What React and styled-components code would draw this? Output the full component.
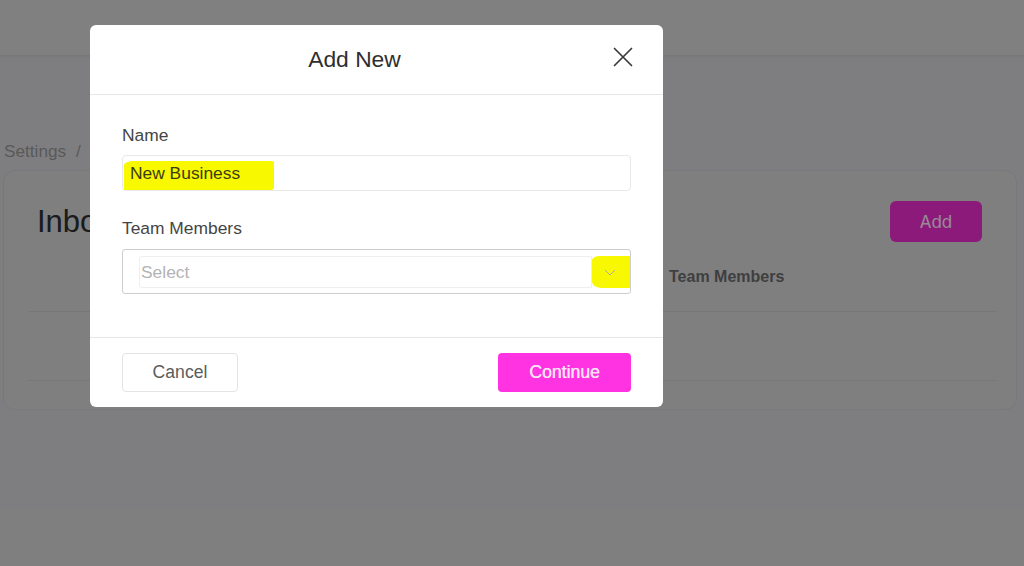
import React from "react";
import styled, { createGlobalStyle } from "styled-components";

const GlobalStyle = createGlobalStyle`
  html, body { margin: 0; padding: 0; }
  body { font-family: "Liberation Sans", Arial, sans-serif; background: #d3d3d5; }
  * { box-sizing: border-box; }
`;

const Page = styled.div`
  position: relative;
  width: 1024px;
  height: 566px;
  overflow: hidden;
  background: #d3d3d5;
`;

const TopBar = styled.div`
  height: 56px;
  background: #d6d6d6;
  border-bottom: 1px solid #c8c8ca;
  box-shadow: 0 1px 3px rgba(0, 0, 0, 0.06);
`;

const Content = styled.div`
  padding: 85px 7px 0 3px;
`;

const Breadcrumb = styled.div`
  padding-left: 1px;
  font-size: 17.2px;
  line-height: 20px;
  color: #959597;
  span { margin-left: 10px; }
`;

const Card = styled.div`
  margin-top: 9px;
  height: 240px;
  border: 1px solid #c9c9cb;
  border-radius: 12px;
  background: #d4d4d6;
  padding: 30px 19px 0 24px;
`;

const TitleRow = styled.div`
  display: flex;
  align-items: center;
  justify-content: space-between;
  padding: 0 15px 0 9px;
  height: 41px;
`;

const CardTitle = styled.h1`
  margin: 0;
  font-weight: 400;
  font-size: 31px;
  color: #2e2e30;
`;

const AddButton = styled.button`
  width: 92px;
  height: 41px;
  border: none;
  border-radius: 6px;
  background: #e82ccc;
  color: #ffe8fb;
  font-family: Inter, "Liberation Sans", sans-serif;
  font-size: 17px;
`;

const TableRow = styled.div`
  display: grid;
  grid-template-columns: 628px 1fr;
  border-bottom: 1px solid #c6c6c8;
  height: ${(p) => p.$h}px;
  align-items: ${(p) => (p.$head ? "end" : "center")};
  padding-bottom: ${(p) => (p.$head ? 25 : 0)}px;
`;

const HeadCell = styled.div`
  padding-left: 13px;
  font-weight: 700;
  font-size: 16px;
  line-height: 18px;
  color: #6a6a6c;
`;

const Overlay = styled.div`
  position: absolute;
  inset: 0;
  background: rgba(0, 0, 0, 0.4);
  padding: 25px 0 0 90px;
`;

const Modal = styled.div`
  width: 573px;
  height: 382px;
  background: #fff;
  border-radius: 6px;
  display: flex;
  flex-direction: column;
`;

const ModalHeader = styled.div`
  position: relative;
  height: 70px;
  border-bottom: 1px solid #e6e6e6;
  display: flex;
  align-items: center;
  justify-content: center;
`;

const ModalTitle = styled.h2`
  margin: 0;
  font-weight: 400;
  font-size: 22.8px;
  color: #2f2f2f;
  transform: translate(-22px, 0);
`;

const CloseButton = styled.button`
  position: absolute;
  right: 30px;
  top: 22px;
  width: 20px;
  height: 20px;
  padding: 0;
  border: none;
  background: none;
  display: flex;
`;

const ModalBody = styled.div`
  flex: 1;
  padding: 31px 32px 0 32px;
  display: flex;
  flex-direction: column;
`;

const Label = styled.label`
  font-size: 17.4px;
  line-height: 19px;
  color: #454545;
  margin-top: ${(p) => p.$mt || 0}px;
  margin-bottom: ${(p) => p.$mb || 10}px;
`;

const TextBox = styled.div`
  height: 36px;
  border: 1px solid #e8e8e8;
  border-radius: 4px;
  display: flex;
  align-items: stretch;
  padding: 5px 0 0 1px;
`;

const Marker = styled.span`
  display: flex;
  align-items: center;
  width: 150px;
  padding: 0 0 5px 6px;
  background: #f8f800;
  border-radius: 10px 2px 3px 0 / 4px 2px 3px 8px;
  font-size: 17.4px;
  color: #3c3c12;
`;

const SelectBox = styled.div`
  height: 45px;
  border: 1px solid #cdcdcd;
  border-radius: 3px;
  display: flex;
  padding: 6px 0 5px 16px;
`;

const SelectInner = styled.div`
  flex: 1;
  border: 1px solid #efefef;
  border-radius: 3px 0 0 3px;
  display: flex;
  align-items: center;
  padding-left: 1px;
  font-size: 17.4px;
  color: #b4b4b4;
`;

const Chevron = styled.div`
  width: 38px;
  background: #f8f800;
  border-radius: 8px 0 0 10px / 4px 0 0 6px;
  display: flex;
  align-items: center;
  justify-content: center;
  padding-right: 3px;
`;

const ModalFooter = styled.div`
  height: 70px;
  border-top: 1px solid #e6e6e6;
  display: flex;
  align-items: flex-start;
  justify-content: space-between;
  padding: 15px 32px 0 32px;
`;

const FooterButton = styled.button`
  height: 39px;
  width: ${(p) => p.$w}px;
  border-radius: 4px;
  font-family: "Liberation Sans", Arial, sans-serif;
  font-size: 17.6px;
  border: ${(p) => (p.$primary ? "none" : "1px solid #e4e4e4")};
  background: ${(p) => (p.$primary ? "#ff33e1" : "#fff")};
  color: ${(p) => (p.$primary ? "#fde4f8" : "#5c5c5c")};
  font-weight: 400;
  text-shadow: ${(p) => (p.$primary ? "0.3px 0 0 #fde4f8" : "none")};
`;

export default function App() {
  return (
    <>
      <GlobalStyle />
      <Page>
        <TopBar />
        <Content>
          <Breadcrumb>
            Settings<span>/</span>
          </Breadcrumb>
          <Card>
            <TitleRow>
              <CardTitle>Inbox</CardTitle>
              <AddButton>Add</AddButton>
            </TitleRow>
            <TableRow $head $h={70}>
              <HeadCell />
              <HeadCell>Team Members</HeadCell>
            </TableRow>
            <TableRow $h={69} />
          </Card>
        </Content>
        <Overlay>
          <Modal>
            <ModalHeader>
              <ModalTitle>Add New</ModalTitle>
              <CloseButton aria-label="Close">
                <svg width="20" height="20" viewBox="0 0 20 20">
                  <path d="M1.5 1.5 L18.5 18.5 M18.5 1.5 L1.5 18.5" stroke="#3a3a3a" strokeWidth="1.7" strokeLinecap="round" fill="none" />
                </svg>
              </CloseButton>
            </ModalHeader>
            <ModalBody>
              <Label>Name</Label>
              <TextBox>
                <Marker>New Business</Marker>
              </TextBox>
              <Label $mt={28} $mb={11}>Team Members</Label>
              <SelectBox>
                <SelectInner>Select</SelectInner>
                <Chevron>
                  <svg width="12" height="7" viewBox="0 0 12 7">
                    <path d="M1 1 L6 6 L11 1" stroke="#b0b085" strokeWidth="1" fill="none" />
                  </svg>
                </Chevron>
              </SelectBox>
            </ModalBody>
            <ModalFooter>
              <FooterButton $w={116}>Cancel</FooterButton>
              <FooterButton $w={133} $primary>Continue</FooterButton>
            </ModalFooter>
          </Modal>
        </Overlay>
      </Page>
    </>
  );
}
